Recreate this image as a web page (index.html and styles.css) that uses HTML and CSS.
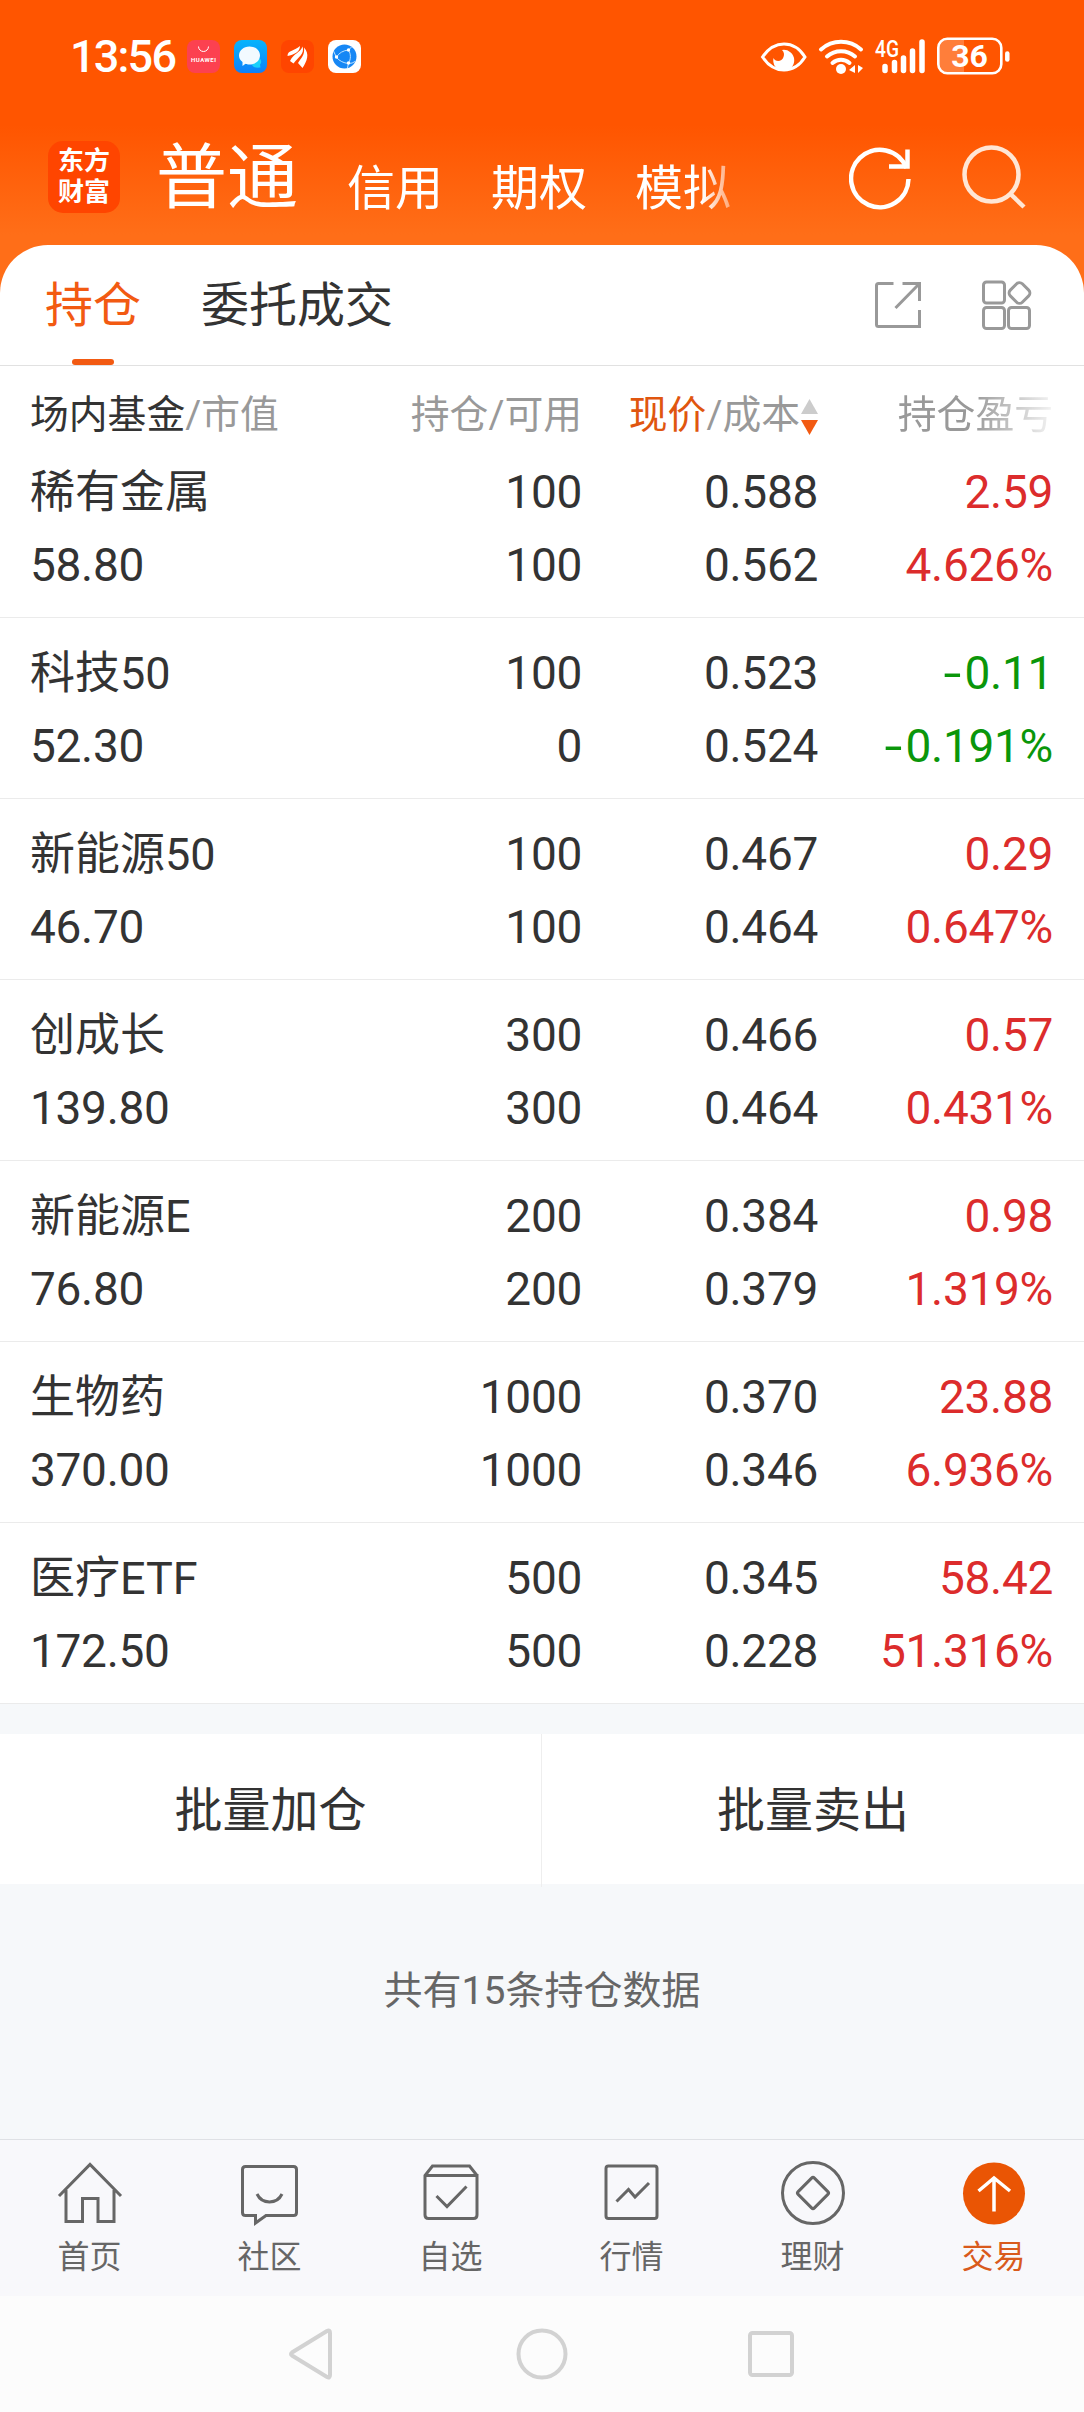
FILE: index.html
```html
<!DOCTYPE html>
<html lang="zh-CN">
<head>
<meta charset="utf-8">
<title>持仓</title>
<link rel="stylesheet" href="styles.css">
</head>
<body>
<header class="top">
  <div class="status">
    <span class="clock">13:56</span>
    <svg class="app" viewBox="0 0 33 33"><rect width="33" height="33" rx="8" fill="#fc4150"/><path d="M11.500 6.500a5 5 0 0 0 10 0" fill="none" stroke="#fff" stroke-width="1"/><text class="brand" x="16.500" y="21.500" text-anchor="middle" textLength="25">HUAWEI</text></svg>
    <svg class="app" viewBox="0 0 33 33"><defs><linearGradient id="sky" x2="0" y2="1"><stop stop-color="#06b4fc"/><stop offset="1" stop-color="#0c80fa"/></linearGradient></defs><rect width="33" height="33" rx="8" fill="url(#sky)"/><path d="M25 18c3 2 2.500 5 1 6.500l.5 3c-4 .5-8 0-8.500-3z" fill="#19d0fb"/><path d="M15.500 6.500c6 0 10.500 4 10.500 9s-4.500 9-10.500 9c-2 0-3-.2-4-.8L8.500 26v-4C6 20 5 18 5 15.500c0-5 4.500-9 10.500-9z" fill="#f2faff"/></svg>
    <svg class="app" viewBox="0 0 33 33"><rect width="33" height="33" rx="8" fill="#ff4500"/><path d="M6.500 16C6.500 10 14 11 19 6 19 12 13 14.500 6.500 16zM9 21C13 13 19 13 21.500 6.500 24 14 17 17 12.500 23.500zM17 23c3-5 7-8 6-15.500C29 14 26 21 21.500 28z" fill="#fff"/></svg>
    <svg class="app" viewBox="0 0 33 33"><rect width="33" height="33" rx="8" fill="#fff"/><circle cx="16.500" cy="16.500" r="12" fill="#1687f5"/><path d="M5.500 11l3 6.500c3 3.500 7 5.500 12 6M8.500 17C11 13 15 10.500 20.500 10M20.500 10c2.500 4 2.500 9 0 13.500M20.500 10l3-3M20.500 23l-1 5M20.500 23.500q4 0 6.500-2" fill="none" stroke="#bfe3ff" stroke-width="1"/><g fill="#fff"><circle cx="8.500" cy="17" r="1.700"/><circle cx="20.500" cy="10" r="1.700"/><circle cx="20.500" cy="23" r="1.700"/></g></svg>
    <svg class="indicators" viewBox="0 0 250 38" fill="none" stroke="#fff">
      <path d="M2.500 20C8 12 15 7 24 7s16 5 21 13c-5 8-12 13-21 13S8 28 2.500 20z" stroke-width="3"/>
      <path d="M22 13a10.500 10.500 0 1 1-8.500 8C15 25 22 25 23.500 20c1-3 .5-5-1.500-7z" fill="#fff" stroke="none"/>
      <g stroke-width="4" stroke-linecap="round"><path d="M61 12.500a30 30 0 0 1 40 0M67 19.500a21 21 0 0 1 28 0M72.500 26a13 13 0 0 1 17 0"/></g>
      <circle cx="81" cy="32" r="5" fill="#fff" stroke="none"/>
      <path d="M95 28v8l-6-3zM98 28v8l5-5z" fill="#fff" stroke="none"/>
      <text class="net" x="115" y="19.500" textLength="24" lengthAdjust="spacingAndGlyphs">4G</text>
      <path d="M125 29.500v4M134.500 25.500v8M143.500 21v12.500M152.500 14v19.500M162 5v28.500" stroke-width="5.500" stroke-linecap="round"/>
      <path d="M187 3h17v32h-17q-8 0-8-8V11q0-8 8-8z" fill="#ff7e3a" stroke="none"/>
      <rect x="178.300" y="1.800" width="63" height="34.500" rx="9" stroke-width="2.600"/>
      <path d="M247.300 16.500v6" stroke-width="4.500" stroke-linecap="round"/>
      <text class="level" x="209.500" y="30" text-anchor="middle">36</text>
    </svg>
  </div>
  <nav class="accounts">
    <div class="logo"><span>东方</span><span>财富</span></div>
    <span class="account-on">普通</span>
    <div class="others"><span>信用</span><span>期权</span><span>模拟</span></div>
    <svg class="refresh" viewBox="0 0 64 64" fill="none" stroke="#fff" stroke-width="4.500"><path d="M59.500 32A28.700 28.700 0 1 1 57.500 21"/><path d="M58.500 2.500v17H40"/></svg>
    <svg class="search" viewBox="0 0 64 64" fill="none" stroke="#ffe6d5" stroke-width="4.500"><circle cx="29.500" cy="29.500" r="27"/><path d="M48.500 49L62 62"/></svg>
  </nav>
</header>
<main class="panel">
  <div class="tabs">
    <span class="tab tab-on">持仓</span><span class="tab">委托成交</span>
    <svg class="share" viewBox="0 0 46 46"><path d="M18.500 1.500H3.500q-2 0-2 2v39q0 2 2 2h41V28M27.500 1.500h17V19M44 2L20.500 26"/></svg>
    <svg class="grid" viewBox="0 0 50 50"><rect x="1.500" y="2" width="21" height="21" rx="3"/><rect x="1.500" y="27.500" width="21" height="21" rx="3"/><rect x="26.500" y="27.500" width="21" height="21" rx="3"/><rect x="29" y="4.500" width="17" height="17" rx="4" transform="rotate(45 37.500 13)"/></svg>
  </div>
  <div class="cols head"><span><b>场内基金</b>/市值</span><span>持仓/可用</span><span class="sorted"><span><em>现价</em>/成本</span><svg class="sort" viewBox="0 0 17 36"><path d="M8.500 0L17 15H0z" fill="#ccc"/><path d="M8.500 36L17 21H0z" fill="#f25a12"/></svg></span><span class="fade">持仓盈亏</span></div>
  <div class="cols row"><span class="name">稀有金属</span><span>100</span><span>0.588</span><span class="up">2.59</span><span>58.80</span><span>100</span><span>0.562</span><span class="up">4.626%</span></div>
  <div class="cols row"><span class="name">科技50</span><span>100</span><span>0.523</span><span class="down"><i>-</i>0.11</span><span>52.30</span><span>0</span><span>0.524</span><span class="down"><i>-</i>0.191%</span></div>
  <div class="cols row"><span class="name">新能源50</span><span>100</span><span>0.467</span><span class="up">0.29</span><span>46.70</span><span>100</span><span>0.464</span><span class="up">0.647%</span></div>
  <div class="cols row"><span class="name">创成长</span><span>300</span><span>0.466</span><span class="up">0.57</span><span>139.80</span><span>300</span><span>0.464</span><span class="up">0.431%</span></div>
  <div class="cols row"><span class="name">新能源E</span><span>200</span><span>0.384</span><span class="up">0.98</span><span>76.80</span><span>200</span><span>0.379</span><span class="up">1.319%</span></div>
  <div class="cols row"><span class="name">生物药</span><span>1000</span><span>0.370</span><span class="up">23.88</span><span>370.00</span><span>1000</span><span>0.346</span><span class="up">6.936%</span></div>
  <div class="cols row"><span class="name">医疗ETF</span><span>500</span><span>0.345</span><span class="up">58.42</span><span>172.50</span><span>500</span><span>0.228</span><span class="up">51.316%</span></div>
</main>
<div class="actions"><span>批量加仓</span><span>批量卖出</span></div>
<p class="count">共有15条持仓数据</p>
<nav class="bottom">
  <a class="item"><svg viewBox="0 0 66 66"><path d="M2 36L33 4.500 64 36M9 30v31.500h16.500V38.500h15.500v23H57V30"/></svg>首页</a>
  <a class="item"><svg viewBox="0 0 66 66"><path d="M8.500 6.500h48q3 0 3 3v43q0 3-3 3H29L18.500 63V55.500H8.500q-3 0-3-3v-43q0-3 3-3zM20 34c5 10.500 20 10.500 25 0"/></svg>社区</a>
  <a class="item"><svg viewBox="0 0 66 66"><path d="M7 15.500h52V55q0 3.500-3.500 3.500h-45Q7 58.500 7 55V15.500L14.500 6h37L59 15.500M18.500 36L29 46.500 48.500 26.500"/></svg>自选</a>
  <a class="item"><svg viewBox="0 0 66 66"><rect x="7" y="6" width="51" height="52.500" rx="2.500"/><path d="M17.500 41.500L29.500 29.500 36 37 50 23"/></svg>行情</a>
  <a class="item"><svg viewBox="0 0 66 66"><circle cx="33" cy="33" r="30.500"/><rect x="21.500" y="21.500" width="23" height="23" rx="2" transform="rotate(45 33 33)"/></svg>理财</a>
  <a class="item item-on"><svg viewBox="0 0 66 66"><circle cx="33" cy="33.500" r="31" fill="#ea5504" stroke="none"/><path d="M33 51.500V17.500M17.500 31L33 18 49 31" stroke="#fff" stroke-width="3.500"/></svg>交易</a>
</nav>
<div class="system">
  <svg class="back" viewBox="0 0 44 52"><path d="M38 3L3 24.500q-2 1.500 0 3L38 49q3 1.500 3-2V5q0-3.500-3-2z"/></svg>
  <svg class="home" viewBox="0 0 52 52"><circle cx="26" cy="26" r="23.500"/></svg>
  <svg class="recent" viewBox="0 0 46 46"><rect x="2" y="2" width="42" height="42" rx="2.500"/></svg>
</div>
</body>
</html>
```
FILE: styles.css
```css
* { box-sizing: border-box; }
body { margin: 0; width: 1084px; height: 2412px; display: flex; flex-direction: column; background: #f6f8fa; color: #333; font-family: Roboto, "Noto Sans CJK SC", sans-serif; }
svg { display: block; flex: none; }
.top { height: 293px; background: linear-gradient(#ff5500 0, #ff5500 125px, #ff6e18 235px, #ff6e18 100%); color: #fff; }
.status { height: 113px; padding: 0 74px 0 70px; display: flex; align-items: center; }
.clock { width: 117px; font-size: 45px; font-weight: 500; letter-spacing: -1.8px; line-height: 113px; }
.app { width: 33px; height: 33px; margin-right: 14px; }
.brand { font-size: 6px; font-weight: 700; fill: #fff; }
.indicators { width: 250px; height: 38px; margin-left: auto; margin-top: -2px; }
.net { font: 500 23px Roboto, sans-serif; fill: #fff; stroke: none; }
.level { font: 700 32px Roboto, sans-serif; fill: #fff; stroke: none; }
.accounts { height: 132px; padding: 0 58px 0 48px; display: flex; align-items: center; }
.logo { width: 72px; height: 72px; margin-top: -4px; border-radius: 15px; background: #ff4500; display: flex; flex: none; flex-direction: column; align-items: center; justify-content: center; font-size: 26px; font-weight: 700; line-height: 31px; }
.account-on { margin: -3px 0 0 36px; width: 191px; flex: none; font-size: 71px; line-height: 90px; }
.others { width: 395px; flex: none; margin-top: 19px; display: flex; gap: 48px; font-size: 48px; line-height: 60px; white-space: nowrap; -webkit-mask: linear-gradient(90deg, #000 355px, transparent 405px); mask: linear-gradient(90deg, #000 355px, transparent 405px); }
.refresh { width: 64px; height: 64px; margin-left: auto; margin-top: -1px; }
.search { width: 64px; height: 64px; margin-left: 49px; margin-top: -4px; }
.panel { margin-top: -48px; background: #fff; border-radius: 48px 48px 0 0; }
.tabs { height: 121px; padding: 0 52px 0 45px; display: flex; align-items: center; border-bottom: 1px solid #e1e1e1; font-size: 48px; }
.tab { height: 120px; line-height: 122px; margin-right: 60px; display: flex; flex-direction: column; align-items: center; }
.tab-on { color: #f25a12; }
.tab-on::after { content: ""; width: 42px; height: 6px; margin-top: -8px; border-radius: 3px; background: #f25a12; }
.share { width: 46px; height: 46px; margin-left: auto; }
.grid { width: 50px; height: 50px; margin-left: 61px; }
.share, .grid { fill: none; stroke: #999; stroke-width: 3; }
.cols { display: grid; grid-template-columns: 252px 300px 236px 235px; padding: 0 31px 0 30px; text-align: right; white-space: nowrap; }
.cols > :nth-child(4n+1) { text-align: left; }
.head { height: 71px; padding-top: 26px; font-size: 38.8px; line-height: 46px; color: #999; }
.head b { font-weight: 400; color: #333; }
.head em { font-style: normal; color: #e0560f; }
.sorted { display: flex; justify-content: flex-end; gap: 1px; }
.sort { width: 17px; height: 36px; margin-top: 7px; }
.fade { -webkit-mask: linear-gradient(90deg, #000 155px, transparent 245px); mask: linear-gradient(90deg, #000 155px, transparent 245px); }
.row { height: 181px; padding-top: 19px; border-bottom: 1px solid #ebebeb; font-size: 46px; letter-spacing: -0.3px; line-height: 73px; grid-auto-rows: 73px; }
.name { font-size: 45px; letter-spacing: 0; }
.up { color: #dc2c2c; }
.down { color: #0a960a; }
.down i { display: inline-block; font-style: normal; transform: scaleX(1.4); margin-right: 6px; }
.actions { margin-top: 30px; height: 150px; display: grid; grid-template-columns: 541px 543px; background: #fff; font-size: 48px; line-height: 153px; text-align: center; }
.actions span + span { border-left: 1px solid #eee; }
.count { margin: 77px 0 0; font-size: 39px; line-height: 60px; text-align: center; color: #666; }
.bottom { margin-top: auto; height: 157px; padding-top: 20px; border-top: 1px solid #dfe1e5; background: #f8f8fb; display: grid; grid-template-columns: 179px repeat(5, 1fr); }
.item { display: flex; flex-direction: column; align-items: center; font-size: 32px; line-height: 50px; color: #666; gap: 6px; }
.item svg { width: 66px; height: 66px; fill: none; stroke: #666; stroke-width: 3; }
.item-on { color: #d95a1c; }
.system { height: 116px; padding-right: 2px; background: #fcfcfc; display: flex; align-items: center; justify-content: center; }
.system svg { fill: none; stroke: #d2d2d2; stroke-width: 4; }
.back { width: 44px; height: 52px; }
.home { width: 52px; height: 52px; margin: 0 180px 0 183px; }
.recent { width: 46px; height: 46px; }
```
